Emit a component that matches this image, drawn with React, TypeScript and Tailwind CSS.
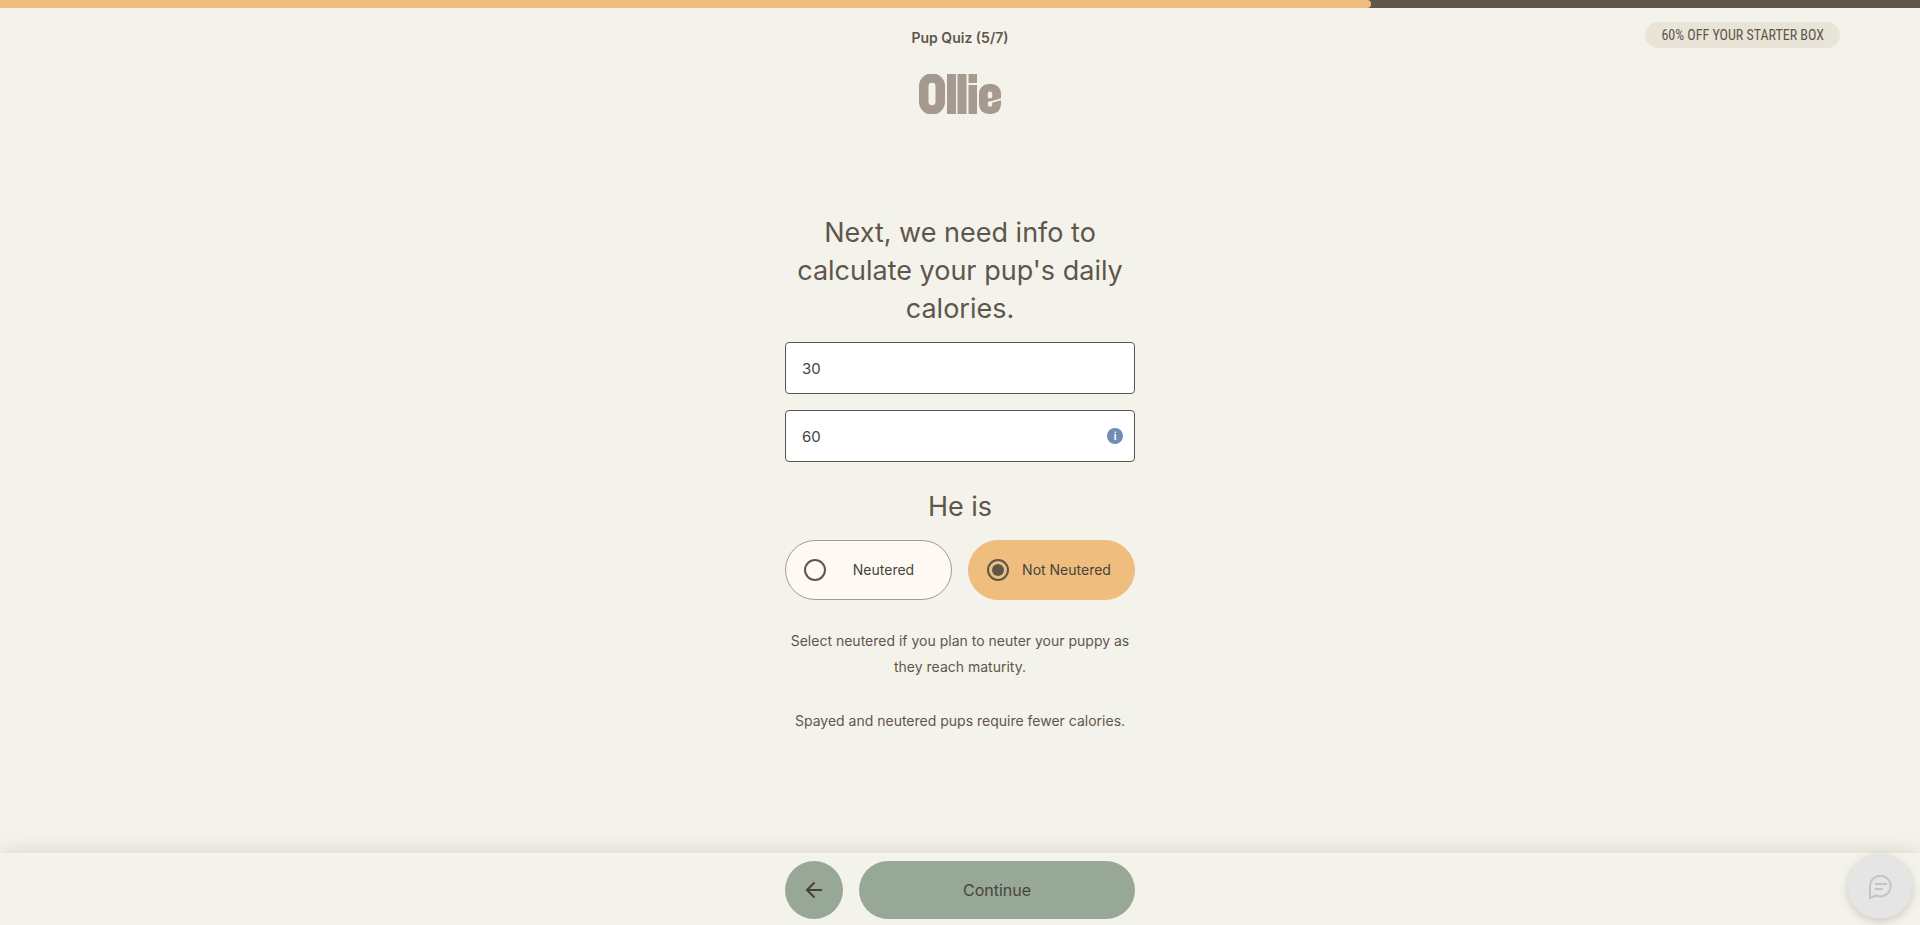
import React, { useState } from "react";

function OllieLogo() {
  return (
    <svg width="82" height="40" viewBox="0 0 82 40" role="img" aria-label="Ollie" fill="#a69990">
      <rect x="4.75" y="4" width="16.5" height="32" rx="8.2" fill="none" stroke="#a69990" strokeWidth="9.5" />
      <rect x="28" y="0" width="9" height="40" />
      <rect x="38.5" y="0" width="9" height="40" />
      <rect x="49.5" y="0" width="8.500" height="9" />
      <rect x="49.5" y="11" width="8.500" height="29" />
      <rect x="60" y="10" width="22" height="30" rx="9.5" />
      <rect x="68.8" y="17.500" width="4.400" height="7" rx="2.200" fill="#f4f3eb" />
      <rect x="68.8" y="27.200" width="4.400" height="5.600" rx="2.200" fill="#f4f3eb" />
      <line x1="69" y1="29" x2="83" y2="25" stroke="#f4f3eb" strokeWidth="1.800" />
    </svg>
  );
}

function BackArrow() {
  return (
    <svg width="18" height="18" viewBox="0 0 18 18" fill="none" stroke="#46403a" strokeWidth="2" aria-hidden="true">
      <path d="M17 9H2M9.500 1.500 2 9l7.500 7.500" />
    </svg>
  );
}

function ChatIcon() {
  return (
    <svg width="24" height="26" viewBox="0 0 24 26" fill="none" stroke="#c4c4c4" strokeWidth="2" aria-hidden="true">
      <path d="M2 24V12a10.300 10.300 0 1 1 6 9.500Z" />
      <path d="M7 10h12M7 15h8" />
    </svg>
  );
}

type OptionProps = { label: string; checked: boolean; onSelect: () => void };

function Option({ label, checked, onSelect }: OptionProps) {
  return (
    <label
      className={
        "flex h-15 flex-1 cursor-pointer items-center rounded-full border pr-2.5 pl-4.5 " +
        (checked ? "border-[#efbd7e] bg-[#efbd7e]" : "border-[#a69990] bg-[#fef9f3]")
      }
    >
      <input
        type="radio"
        name="neutered"
        checked={checked}
        onChange={onSelect}
        className="size-5.5 shrink-0 appearance-none rounded-full border-2 border-[#5f564b] bg-clip-content p-[3px] checked:bg-[#5f564b]"
      />
      <span className="flex-1 text-center text-sm text-[#46443e]">{label}</span>
    </label>
  );
}

export default function App() {
  const [age, setAge] = useState("30");
  const [weight, setWeight] = useState("60");
  const [neutered, setNeutered] = useState(false);

  return (
    <div className="flex min-h-screen flex-col bg-[#f4f3eb] font-['Inter',sans-serif] text-[#5f564b]">
      <div className="h-2 bg-[#5f564b]" role="progressbar" aria-label="Quiz progress" aria-valuenow={5} aria-valuemax={7}>
        <div className="h-full w-5/7 rounded-r bg-[#efbd7e]" />
      </div>

      <header className="grid grid-cols-3 items-start">
        <div className="col-start-2 flex flex-col items-center pt-5">
          <p className="text-sm font-semibold">Pup Quiz (5/7)</p>
          <a href="#" className="mt-6.5">
            <OllieLogo />
          </a>
        </div>
        <p className="mt-3.5 mr-20 justify-self-end rounded-full bg-[#e8e4d8] px-4 text-sm leading-[26px] font-['Roboto_Condensed',sans-serif]">
          60% OFF YOUR STARTER BOX
        </p>
      </header>

      <main className="mx-auto w-full max-w-[350px] flex-1 pt-25 text-center">
        <h1 className="text-[27px] leading-[38px]">Next, we need info to calculate your pup's daily calories.</h1>
        <input
          aria-label="Current weight"
          value={age}
          onChange={(e) => setAge(e.target.value)}
          className="mt-3.5 block h-13 w-full rounded border border-[#5f564b] bg-white px-4 text-[15px] text-[#46443e]"
        />
        <div className="relative mt-4">
          <input
            aria-label="Ideal weight"
            value={weight}
            onChange={(e) => setWeight(e.target.value)}
            className="block h-13 w-full rounded border border-[#5f564b] bg-white pr-10 pl-4 text-[15px] text-[#46443e]"
          />
          <button
            type="button"
            aria-label="More information"
            className="absolute inset-y-0 right-3 my-auto size-4 rounded-full bg-[#6f8cb5] text-[10px] leading-4 font-bold text-white"
          >
            i
          </button>
        </div>

        <h2 className="mt-6.5 text-[27px] leading-[38px]">He is</h2>
        <div className="mt-3.5 flex gap-4">
          <Option label="Neutered" checked={neutered} onSelect={() => setNeutered(true)} />
          <Option label="Not Neutered" checked={!neutered} onSelect={() => setNeutered(false)} />
        </div>

        <p className="mt-7 text-sm leading-[26px]">Select neutered if you plan to neuter your puppy as they reach maturity.</p>
        <p className="mt-7 text-sm leading-[26px]">Spayed and neutered pups require fewer calories.</p>
      </main>

      <footer className="sticky bottom-0 bg-[#f4f3eb] pt-2 pb-1.5 shadow-[0_0_20px_rgba(95,86,75,0.2)]">
        <div className="mx-auto flex max-w-[350px] gap-4">
          <button type="button" aria-label="Back" className="flex size-[58px] items-center justify-center rounded-full bg-[#98a896]">
            <BackArrow />
          </button>
          <button type="button" className="h-[58px] flex-1 rounded-full bg-[#98a896] text-base text-[#46443e]">
            Continue
          </button>
        </div>
      </footer>

      <button
        type="button"
        aria-label="Open chat"
        className="fixed right-2 bottom-1.5 flex size-16 items-center justify-center rounded-full bg-[#e5e5e5] shadow-[0_2px_8px_rgba(95,86,75,0.3)]"
      >
        <ChatIcon />
      </button>
    </div>
  );
}
